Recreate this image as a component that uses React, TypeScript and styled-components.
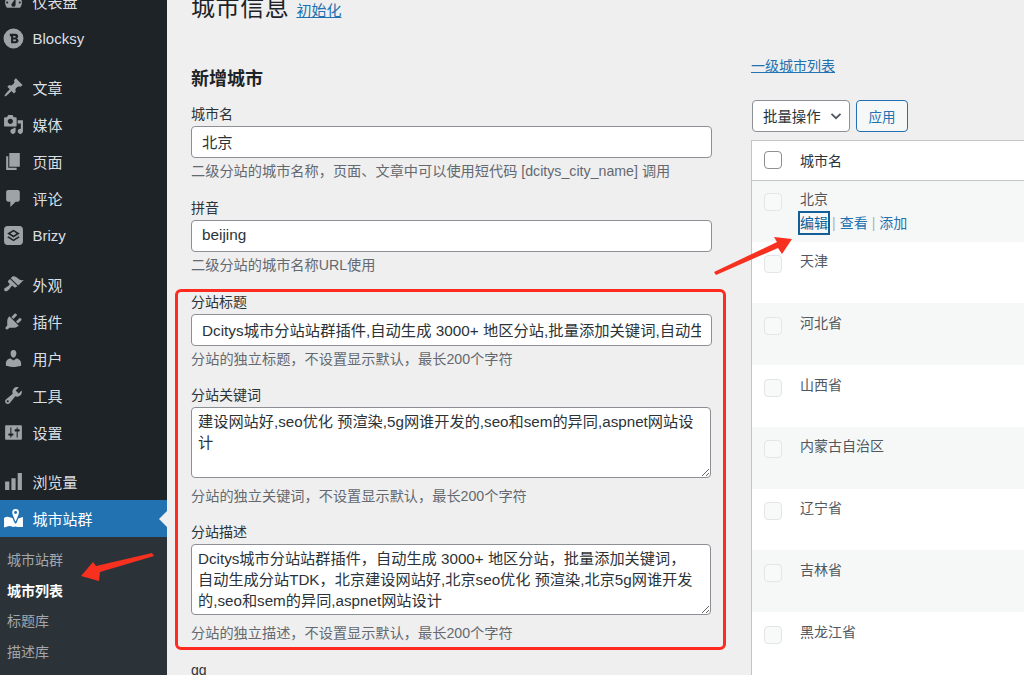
import React from "react";
import styled, { createGlobalStyle } from "styled-components";

const Global = createGlobalStyle`
  html, body { margin: 0; padding: 0; height: 675px; overflow: hidden; background: #efefef; }
  body { font-family: "Liberation Sans", "Noto Sans CJK SC", sans-serif; font-size: 14px; color: #2c3338; }
  * { box-sizing: border-box; }
`;

const Page = styled.div`
  position: relative;
  display: flex;
  width: 1024px;
  height: 675px;
  overflow: hidden;
`;
const Sidebar = styled.nav`
  flex: 0 0 167px;
  margin-top: -17px;
  height: 692px;
  background: #1d2327;
  display: flex;
  flex-direction: column;
`;
const MenuGroup = styled.div`
  margin-bottom: 12px;
`;
const MenuItem = styled.div<{ $active?: boolean }>`
  position: relative;
  height: 37px;
  display: flex;
  align-items: center;
  gap: 8.5px;
  padding-left: 3px;
  font-size: 15px;
  color: ${(p) => (p.$active ? "#fff" : "#dcdfe1")};
  background: ${(p) => (p.$active ? "#2271b1" : "transparent")};
  svg { width: 21px; height: 21px; fill: ${(p) => (p.$active ? "#fff" : "#9ea3a8")}; flex: none; }
`;
const ActiveNotch = styled.span`
  position: absolute;
  right: 0;
  top: 50%;
  margin-top: -8px;
  border: 8px solid transparent;
  border-right-color: #efefef;
  border-left-width: 0;
`;
const SubMenu = styled.div`
  flex: 1;
  background: #2c3338;
  padding-top: 8px;
`;
const SubItem = styled.div<{ $current?: boolean }>`
  height: 30.7px;
  line-height: 30.7px;
  padding-left: 7px;
  font-size: 14px;
  font-weight: ${(p) => (p.$current ? 700 : 400)};
  color: ${(p) => (p.$current ? "#fff" : "#a3a7ab")};
`;
const Main = styled.main`
  flex: 1;
  min-width: 0;
  padding: 0 0 0 24px;
  display: flex;
  gap: 39px;
`;
const FormColumn = styled.section`
  flex: 0 0 521px;
  margin-top: -7px;
`;
const TitleRow = styled.div`
  display: flex;
  align-items: baseline;
  gap: 7px;
  height: 30px;
  line-height: 30px;
`;
const PageTitle = styled.h1`
  margin: 0;
  font-size: 24px;
  font-weight: 400;
  letter-spacing: 0.6px;
  color: #1d2327;
`;
const TextLink = styled.a<{ $size?: number }>`
  color: #2271b1;
  text-decoration: underline;
  font-size: ${(p) => p.$size ?? 14}px;
`;
const SectionTitle = styled.h2`
  margin: 42px 0 0;
  height: 28px;
  line-height: 28px;
  font-size: 18px;
  font-weight: 700;
  color: #1d2327;
`;
const Field = styled.div<{ $mb?: number; $mt?: number }>`
  margin-top: ${(p) => p.$mt ?? 0}px;
  margin-bottom: ${(p) => p.$mb ?? 0}px;
`;
const Label = styled.label`
  display: block;
  height: 20px;
  line-height: 18px;
  font-size: 14px;
  color: #2c3338;
  margin-bottom: 1px;
`;
const TextInput = styled.input`
  display: block;
  width: 521px;
  height: 32px;
  padding: 0 10px 2px;
  border: 1px solid #8c8f94;
  border-radius: 4px;
  background: #fff;
  font: 15.3px "Liberation Sans", "Noto Sans CJK SC", sans-serif;
  color: #2c3338;
  outline: none;
`;
const TextArea = styled.textarea`
  display: block;
  width: 520px;
  height: 71px;
  margin-top: 1px;
  padding: 3px 13px 4px 6px;
  border: 1px solid #8c8f94;
  border-radius: 4px;
  background: #fff;
  font: 15.2px/21px "Liberation Sans", "Noto Sans CJK SC", sans-serif;
  color: #2c3338;
  outline: none;
  overflow: hidden;
`;
const Help = styled.p<{ $mt?: number }>`
  margin: ${(p) => p.$mt ?? 4}px 0 0;
  height: 20px;
  line-height: 18px;
  font-size: 14.2px;
  color: #646970;
  white-space: nowrap;
`;
const Highlight = styled.div`
  margin: 0 -14px 0 -16px;
  padding: 1.5px 11px 0 13px;
  height: 361.5px;
  border: 3px solid #ff2a20;
  border-radius: 6px;
`;
const GgLabel = styled(Label)`
  margin-top: 11px;
`;
const ListColumn = styled.section`
  flex: 1;
  min-width: 0;
  padding-top: 55px;
`;
const Tablenav = styled.div`
  display: flex;
  gap: 6px;
  margin: 25px 0 8px 1px;
`;
const BulkSelect = styled.div`
  width: 98px;
  height: 32px;
  padding: 0 6px 2px 10px;
  border: 1px solid #8c8f94;
  border-radius: 4px;
  background: #fff;
  display: flex;
  align-items: center;
  justify-content: space-between;
  font-size: 14.4px;
  color: #2c3338;
  svg { margin-top: 2px; }
`;
const ApplyButton = styled.button`
  width: 52px;
  height: 32px;
  border: 1px solid #2271b1;
  border-radius: 4px;
  background: #f6f7f7;
  color: #2271b1;
  font: 13.5px "Liberation Sans", "Noto Sans CJK SC", sans-serif;
  padding: 0;
`;
const Table = styled.div`
  background: #fff;
  border: 1px solid #c3c4c7;
  border-right: 0;
  border-bottom: 0;
  height: 600px;
`;
const HeadRow = styled.div`
  height: 39.5px;
  display: flex;
  align-items: center;
  padding-left: 12px;
  gap: 18px;
  border-bottom: 1px solid #c3c4c7;
  font-size: 14px;
  color: #2c3338;
`;
const Row = styled.div<{ $alt?: boolean; $first?: boolean }>`
  height: ${(p) => (p.$first ? "61px" : "61.8px")};
  display: flex;
  align-items: flex-start;
  padding: ${(p) => (p.$first ? "8px" : "9.5px")} 0 0 12px;
  gap: 18px;
  background: ${(p) => (p.$alt ? "#f6f7f7" : "#fff")};
  color: #50575e;
  font-size: 14px;
`;
const CheckBox = styled.span<{ $strong?: boolean }>`
  flex: none;
  width: 18px;
  height: 18px;
  margin-top: ${(p) => (p.$strong ? "0" : "4px")};
  border: 1px solid ${(p) => (p.$strong ? "#8c8f94" : "#e3e5e6")};
  border-radius: 4px;
  background: ${(p) => (p.$strong ? "#fff" : "#f8f9f9")};
`;
const CityName = styled.div`
  line-height: 20px;
`;
const RowActions = styled.div`
  display: flex;
  align-items: center;
  margin-top: 4px;
  line-height: 20px;
  font-size: 14px;
  color: #b0b3b6;
`;
const ActionLink = styled.a<{ $focus?: boolean }>`
  color: ${(p) => (p.$focus ? "#135e96" : "#2271b1")};
  margin: 0 4px;
  ${(p) => p.$focus && "outline: 2px solid #135e96; margin-left: 0;"}
`;
const Arrow = styled.svg`
  position: absolute;
  left: 0;
  top: 0;
  width: 1024px;
  height: 675px;
  pointer-events: none;
`;

const Dash = ({ d }: { d: string }) => (
  <svg viewBox="0 0 20 20"><path d={d} /></svg>
);

const icons = {
  dashboard: "M3.76 16h12.48c1.1-1.37 1.76-3.11 1.76-5 0-4.42-3.58-8-8-8s-8 3.58-8 8c0 1.89.66 3.63 1.76 5zM10 4c.55 0 1 .45 1 1s-.45 1-1 1-1-.45-1-1 .45-1 1-1zM6 6c.55 0 1 .45 1 1s-.45 1-1 1-1-.45-1-1 .45-1 1-1zm8 0c.55 0 1 .45 1 1s-.45 1-1 1-1-.45-1-1 .45-1 1-1zm-5.37 5.55L12 7v6c0 1.1-.9 2-2 2s-2-.9-2-2c0-.57.24-1.08.63-1.45zM4 10c.55 0 1 .45 1 1s-.45 1-1 1-1-.45-1-1 .45-1 1-1zm12 0c.55 0 1 .45 1 1s-.45 1-1 1-1-.45-1-1 .45-1 1-1z",
  post: "M10.44 3.02l1.82-1.82 6.36 6.35-1.83 1.82c-1.05-.68-2.48-.57-3.41.36l-.75.75c-.92.93-1.04 2.35-.35 3.41l-1.83 1.82-2.41-2.41-2.8 2.79c-.42.42-3.38 2.71-3.8 2.29s1.86-3.39 2.28-3.81l2.79-2.79L4.1 9.36l1.83-1.82c1.05.69 2.48.57 3.4-.36l.75-.75c.93-.92 1.05-2.35.36-3.41z",
  media: "M13 11V4c0-.55-.45-1-1-1h-1.67L9 1H5L3.67 3H2c-.55 0-1 .45-1 1v7c0 .55.45 1 1 1h10c.55 0 1-.45 1-1zM7 4.5c1.38 0 2.5 1.12 2.5 2.5S8.38 9.5 7 9.5 4.5 8.38 4.5 7 5.62 4.5 7 4.5zM14 6h5v10.5c0 1.38-1.12 2.5-2.5 2.5S14 17.88 14 16.5s1.12-2.5 2.5-2.5c.17 0 .34.02.5.05V9h-3V6zm-4 8.05V13h2v3.5c0 1.38-1.12 2.5-2.5 2.5S7 17.88 7 16.5 8.12 14 9.5 14c.17 0 .34.02.5.05z",
  page: "M6 15V2h10v13H6zm-1 1h8v2H3V5h2v11z",
  comments: "M5 2h9c1.1 0 2 .9 2 2v7c0 1.1-.9 2-2 2h-2l-5 5v-5H5c-1.1 0-2-.9-2-2V4c0-1.1.9-2 2-2z",
  appearance: "M14.48 11.06L7.41 3.99l1.5-1.5c.5-.56 2.3-.47 3.51.32 1.21.8 1.43 1.28 2.91 2.1 1.18.64 2.45 1.26 4.45.85zm-.71.71L6.7 4.7 4.93 6.47c-.39.39-.39 1.02 0 1.41l1.06 1.06c.39.39.39 1.03 0 1.42-.6.6-1.43 1.11-2.21 1.69-.35.26-.7.53-1.01.84C1.43 13.23.4 14.89 1.53 16.02c1.12 1.12 2.79.1 4.13-1.24.31-.31.58-.66.84-1.01.58-.78 1.09-1.61 1.69-2.21.39-.39 1.03-.39 1.42 0l1.06 1.06c.39.39 1.02.39 1.41 0z",
  plugins: "M13.11 4.36L9.87 7.6 8 5.73l3.24-3.24c.35-.34 1.05-.2 1.56.32.52.51.66 1.21.31 1.55zm-8 1.77l.91-1.12 9.01 9.01-1.19.84c-.71.71-2.63 1.16-3.82 1.16H6.14L4.9 17.26c-.59.59-1.54.59-2.12 0-.59-.58-.59-1.53 0-2.12l1.24-1.24v-3.88c0-1.13.4-3.19 1.09-3.89zm7.26 3.97l3.24-3.24c.34-.35 1.04-.21 1.55.31.52.51.66 1.21.31 1.55l-3.24 3.25z",
  users: "M10 9.25c-2.27 0-2.73-3.44-2.73-3.44C7 4.02 7.82 2 9.97 2c2.16 0 2.98 2.02 2.71 3.81 0 0-.41 3.44-2.68 3.44zm0 2.57L12.72 10c2.39 0 4.52 2.33 4.52 4.53v2.49s-3.65 1.13-7.24 1.13c-3.65 0-7.24-1.13-7.24-1.13v-2.49c0-2.25 1.94-4.48 4.47-4.48z",
  tools: "M16.68 9.77c-1.34 1.34-3.3 1.67-4.95.99l-5.41 6.52c-.99.99-2.59.99-3.58 0s-.99-2.59 0-3.57l6.52-5.42c-.68-1.65-.35-3.61.99-4.95 1.28-1.28 3.12-1.62 4.72-1.06l-2.89 2.89 2.82 2.82 2.86-2.87c.53 1.58.18 3.39-1.08 4.65zM3.81 16.21c.4.39 1.04.39 1.43 0 .4-.4.4-1.04 0-1.43-.39-.4-1.03-.4-1.43 0-.39.39-.39 1.03 0 1.43z",
  settings: "M18 16V4c0-.55-.45-1-1-1H3c-.55 0-1 .45-1 1v12c0 .55.45 1 1 1h14c.55 0 1-.45 1-1zM8 11h1c.55 0 1 .45 1 1s-.45 1-1 1H8v1.5c0 .28-.22.5-.5.5s-.5-.22-.5-.5V13H6c-.55 0-1-.45-1-1s.45-1 1-1h1V5.5c0-.28.22-.5.5-.5s.5.22.5.5V11zm5-2h-1c-.55 0-1-.45-1-1s.45-1 1-1h1V5.5c0-.28.22-.5.5-.5s.5.22.5.5V7h1c.55 0 1 .45 1 1s-.45 1-1 1h-1v5.5c0 .28-.22.5-.5.5s-.5-.22-.5-.5V9z",
  chart: "M18 18V2h-4v16h4zm-6 0V7H8v11h4zm-6 0v-8H2v8h4z",
  blocksy: "M10 .5a9.5 9.5 0 1 0 0 19 9.5 9.5 0 0 0 0-19zM6.5 5.500h5.200c1.700 0 2.800 1 2.800 2.400 0 .9-.5 1.600-1.200 2 .9.4 1.500 1.200 1.500 2.200 0 1.500-1.200 2.400-3 2.400H7.700V7.800H6.500zM9.700 7.600v1.500h1.600c.5 0 .9-.3.9-.8s-.4-.7-.9-.7zm0 3.300v1.600h1.800c.6 0 1-.3 1-.8s-.4-.8-1-.8z",
  brizy: "M4.500 1h11A3.500 3.500 0 0 1 19 4.500v11a3.500 3.500 0 0 1-3.500 3.500h-11A3.500 3.500 0 0 1 1 15.500v-11A3.500 3.500 0 0 1 4.500 1zM10 4.500 4 8.200 10 12l6-3.800zm0 1.800 3 1.900-3 1.900-3-1.900zM5.300 10.800 4 11.700 10 15.500l6-3.800-1.300-.9L10 13.700z",
  map: "M1 9.500Q3 8 5.500 8.500L9 9.500 11 14 12 15 13 14 14.500 10 19 8.500V18L14 18Q11.500 17 9.500 18 7 16.800 5 17.300L1 18.500zM12 1a3.200 3.200 0 0 1 3.200 3.200c0 1.600-2.400 7-3.200 8.800-.8-1.800-3.200-7.200-3.200-8.800A3.200 3.200 0 0 1 12 1zm0 1.800a1.400 1.400 0 1 0 0 2.800 1.400 1.400 0 0 0 0-2.800z",
};

const menuGroups: { label: string; icon: string }[][] = [
  [
    { label: "仪表盘", icon: icons.dashboard },
    { label: "Blocksy", icon: icons.blocksy },
  ],
  [
    { label: "文章", icon: icons.post },
    { label: "媒体", icon: icons.media },
    { label: "页面", icon: icons.page },
    { label: "评论", icon: icons.comments },
    { label: "Brizy", icon: icons.brizy },
  ],
  [
    { label: "外观", icon: icons.appearance },
    { label: "插件", icon: icons.plugins },
    { label: "用户", icon: icons.users },
    { label: "工具", icon: icons.tools },
    { label: "设置", icon: icons.settings },
  ],
];

const cities = ["天津", "河北省", "山西省", "内蒙古自治区", "辽宁省", "吉林省", "黑龙江省"];

export default function App() {
  return (
    <Page>
      <Global />
      <Sidebar>
        {menuGroups.map((group, i) => (
          <MenuGroup key={i}>
            {group.map((m) => (
              <MenuItem key={m.label}>
                <Dash d={m.icon} />
                {m.label}
              </MenuItem>
            ))}
          </MenuGroup>
        ))}
        <MenuItem>
          <Dash d={icons.chart} />
          浏览量
        </MenuItem>
        <MenuItem $active>
          <Dash d={icons.map} />
          城市站群
          <ActiveNotch />
        </MenuItem>
        <SubMenu>
          <SubItem>城市站群</SubItem>
          <SubItem $current>城市列表</SubItem>
          <SubItem>标题库</SubItem>
          <SubItem>描述库</SubItem>
        </SubMenu>
      </Sidebar>
      <Main>
        <FormColumn>
          <TitleRow>
            <PageTitle>城市信息</PageTitle>
            <TextLink $size={15}>初始化</TextLink>
          </TitleRow>
          <SectionTitle>新增城市</SectionTitle>
          <Field $mt={12} $mb={17}>
            <Label>城市名</Label>
            <TextInput readOnly value="北京" />
            <Help>二级分站的城市名称，页面、文章中可以使用短代码 [dcitys_city_name] 调用</Help>
          </Field>
          <Field $mb={12.5}>
            <Label>拼音</Label>
            <TextInput readOnly value="beijing" />
            <Help>二级分站的城市名称URL使用</Help>
          </Field>
          <Highlight>
            <Field $mb={16}>
              <Label>分站标题</Label>
              <TextInput readOnly value="Dcitys城市分站站群插件,自动生成 3000+ 地区分站,批量添加关键词,自动生成分站TDK" />
              <Help>分站的独立标题，不设置显示默认，最长200个字符</Help>
            </Field>
            <Field $mb={16}>
              <Label>分站关键词</Label>
              <TextArea readOnly value="建设网站好,seo优化 预渲染,5g网谁开发的,seo和sem的异同,aspnet网站设计" />
              <Help $mt={9}>分站的独立关键词，不设置显示默认，最长200个字符</Help>
            </Field>
            <Field>
              <Label>分站描述</Label>
              <TextArea readOnly value="Dcitys城市分站站群插件，自动生成 3000+ 地区分站，批量添加关键词，自动生成分站TDK，北京建设网站好,北京seo优化 预渲染,北京5g网谁开发的,seo和sem的异同,aspnet网站设计" />
              <Help $mt={9}>分站的独立描述，不设置显示默认，最长200个字符</Help>
            </Field>
          </Highlight>
          <GgLabel>gg</GgLabel>
        </FormColumn>
        <ListColumn>
          <TextLink>一级城市列表</TextLink>
          <Tablenav>
            <BulkSelect>
              批量操作
              <svg width="14" height="14" viewBox="0 0 14 14" fill="none" stroke="#50575e" strokeWidth="1.8"><path d="M2.500 4.800 7 9.200l4.500-4.400" /></svg>
            </BulkSelect>
            <ApplyButton>应用</ApplyButton>
          </Tablenav>
          <Table>
            <HeadRow>
              <CheckBox $strong />
              城市名
            </HeadRow>
            <Row $alt $first>
              <CheckBox />
              <div>
                <CityName>北京</CityName>
                <RowActions>
                  <ActionLink $focus>编辑</ActionLink>|<ActionLink>查看</ActionLink>|<ActionLink>添加</ActionLink>
                </RowActions>
              </div>
            </Row>
            {cities.map((c, i) => (
              <Row key={c} $alt={i % 2 === 1}>
                <CheckBox />
                <CityName>{c}</CityName>
              </Row>
            ))}
          </Table>
        </ListColumn>
      </Main>
      <Arrow viewBox="0 0 1024 675">
        <path fill="#f7301f" d="M152 553 154 556 100 572 99 581 81 576 93 562 96 566z" />
        <path fill="#f7301f" d="M714 272 716 275 778 248 782 254 792 239 774 237 777 242z" />
      </Arrow>
    </Page>
  );
}
